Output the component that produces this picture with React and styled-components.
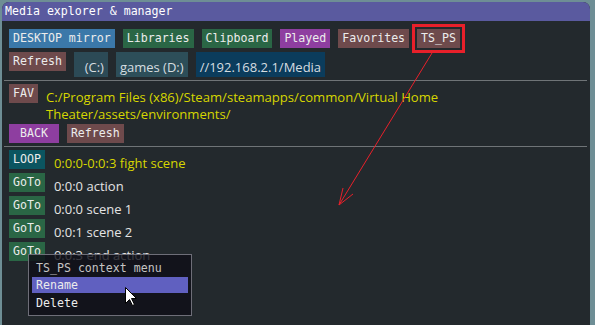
import styled, { createGlobalStyle } from 'styled-components';

const mono = `"DejaVu Sans Mono", "Liberation Mono", monospace`;
const sans = `"Open Sans", "Noto Sans", sans-serif`;

const GlobalStyle = createGlobalStyle`
  html, body {
    margin: 0;
    padding: 0;
    background: #6e8e95;
    overflow: hidden;
  }
`;

const Page = styled.div`
  position: relative;
  width: 595px;
  height: 325px;
  padding: 2px 5px 0 2px;
  box-sizing: border-box;
  overflow: hidden;
`;

const Window = styled.div`
  position: relative;
  background: #23292d;
  border-radius: 7px 7px 0 0;
  height: 360px;
  overflow: hidden;
`;

const TitleBar = styled.div`
  height: 19px;
  line-height: 19px;
  padding-left: 3px;
  background: #5a5a9f;
  color: #ffffff;
  font-family: ${mono};
  font-size: 11.6px;
  white-space: pre;
`;

const Body = styled.div`
  display: flex;
  flex-direction: column;
  padding: 8px 7px;
`;

const Row = styled.div`
  display: flex;
  align-items: flex-start;
  gap: 8px;
  margin-top: ${p => p.$mt || 0}px;
`;

const Button = styled.div`
  height: 19px;
  line-height: 19px;
  padding: 0 4px;
  background: ${p => p.$bg};
  color: #ececec;
  font-family: ${mono};
  font-size: 11.6px;
  white-space: pre;
  outline: ${p => (p.$marked ? '3px solid #e8202a' : 'none')};
  outline-offset: 2px;
`;

const Drive = styled.div`
  height: 25px;
  line-height: 30px;
  padding: 0 4px;
  background: ${p => p.$bg};
  color: #d6dde0;
  font-family: ${sans};
  font-size: 13px;
  white-space: pre;
`;

const Separator = styled.div`
  height: 1px;
  background: #6f7477;
  margin: 3px -4px 3px -5px;
`;

const PathText = styled.div`
  padding-top: 5px;
  color: #d6d600;
  font-family: ${sans};
  font-size: 13.1px;
  line-height: 17px;
`;

const ListRow = styled.div`
  display: flex;
  align-items: flex-start;
  gap: 9px;
  height: 19px;
  margin-bottom: 4px;
`;

const Label = styled.div`
  margin-top: 5px;
  color: ${p => (p.$active ? '#d6d600' : '#e4e4e4')};
  font-family: ${sans};
  font-size: 13px;
  line-height: 17px;
  white-space: pre;
`;

const Popup = styled.div`
  position: absolute;
  left: 28px;
  top: 254px;
  width: 156px;
  height: 52px;
  border: 1px solid #6e6e78;
  background: rgba(14, 14, 23, 0.8);
  padding: 4px 3px;
  box-sizing: content-box;
  font-family: ${mono};
  font-size: 11.6px;
`;

const PopupTitle = styled.div`
  height: 18px;
  line-height: 18px;
  padding-left: 4px;
  color: #c4c4c4;
`;

const PopupItem = styled.div`
  height: 16px;
  line-height: 16px;
  padding-left: 4px;
  margin-bottom: 2px;
  color: #ececec;
  background: ${p => (p.$hover ? '#6060c0' : 'transparent')};
`;

const Overlay = styled.svg`
  position: absolute;
  left: 0;
  top: 0;
  pointer-events: none;
`;

const green = '#2a6645';
const brown = '#6e4a4c';
const purple = '#8e3ea0';

const scenes = [
  { at: '0:0:0', name: 'action' },
  { at: '0:0:0', name: 'scene 1' },
  { at: '0:0:1', name: 'scene 2' },
  { at: '0:0:3', name: 'end action' },
];

export default function App() {
  return (
    <Page>
      <GlobalStyle />
      <Window>
        <TitleBar>Media explorer &amp; manager</TitleBar>
        <Body>
          <Row>
            <Button $bg="#3b78a9">DESKTOP mirror</Button>
            <Button $bg={green}>Libraries</Button>
            <Button $bg={green}>Clipboard</Button>
            <Button $bg={purple}>Played</Button>
            <Button $bg={brown}>Favorites</Button>
            <Button $bg={brown} $marked>TS_PS</Button>
          </Row>
          <Row $mt={4}>
            <Button $bg={brown}>Refresh</Button>
            <Drive $bg="#2c4a56">{'  (C:)'}</Drive>
            <Drive $bg="#2d4e59">games (D:)</Drive>
            <Drive $bg="#0b3c5c">//192.168.2.1/Media</Drive>
          </Row>
          <Separator />
          <Row>
            <Button $bg={brown}>FAV</Button>
            <PathText>
              <div>C:/Program Files (x86)/Steam/steamapps/common/Virtual Home</div>
              <div>Theater/assets/environments/</div>
            </PathText>
          </Row>
          <Row $mt={1}>
            <Button $bg={purple}>{' BACK '}</Button>
            <Button $bg={brown}>Refresh</Button>
          </Row>
          <Separator />
          <ListRow>
            <Button $bg="#0b5560">LOOP</Button>
            <Label $active>0:0:0-0:0:3 fight scene</Label>
          </ListRow>
          {scenes.map((s, i) => (
            <ListRow key={i}>
              <Button $bg={green}>GoTo</Button>
              <Label>{s.at} {s.name}</Label>
            </ListRow>
          ))}
        </Body>
      </Window>

      <Popup>
        <PopupTitle>TS_PS context menu</PopupTitle>
        <PopupItem $hover>Rename</PopupItem>
        <PopupItem>Delete</PopupItem>
      </Popup>

      <Overlay width="595" height="325" viewBox="0 0 595 325">
        <g stroke="#e8202a" strokeWidth="1" fill="none">
          <line x1="432" y1="53" x2="339" y2="205" />
          <line x1="339" y1="205" x2="343" y2="188" />
          <line x1="339" y1="205" x2="353" y2="194" />
        </g>
        <path
          d="M125.5 287.5 L125.5 303.5 L129.5 299.5 L132.5 305.5 L134.5 304.5 L131.5 298.5 L136.5 298.5 Z"
          fill="#ffffff"
          stroke="#000000"
          strokeWidth="1"
        />
      </Overlay>
    </Page>
  );
}
